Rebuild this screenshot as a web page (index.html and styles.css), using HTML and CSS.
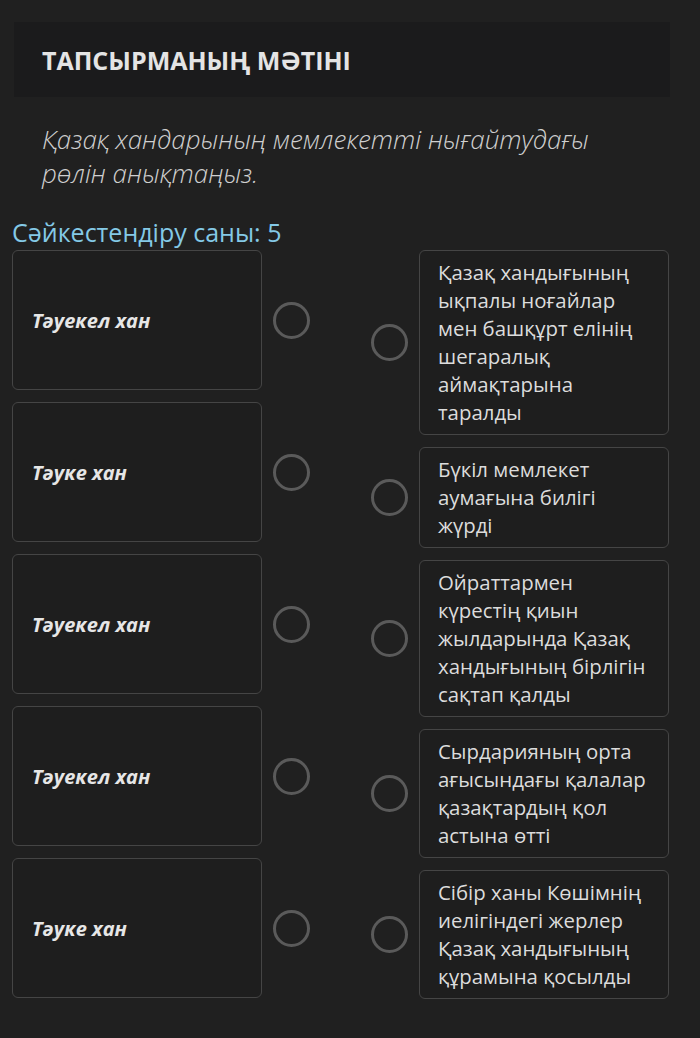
FILE: index.html
```html
<!DOCTYPE html>
<html lang="kk">
<head>
    <meta charset="UTF-8">
    <title>Тапсырма</title>
    <link rel="stylesheet" href="styles.css">
</head>
<body>
    <div class="page">
        <div class="task-head">
            <h2>ТАПСЫРМАНЫҢ МӘТІНІ</h2>
        </div>
        <p class="question">Қазақ хандарының мемлекетті нығайтудағы рөлін анықтаңыз.</p>
        <div class="count">Сәйкестендіру саны: 5</div>

        <div class="match">
            <div class="col">
                <div class="item">
                    <div class="card left">Тәуекел хан</div>
                    <span class="dot"></span>
                </div>
                <div class="item">
                    <div class="card left">Тәуке хан</div>
                    <span class="dot"></span>
                </div>
                <div class="item">
                    <div class="card left">Тәуекел хан</div>
                    <span class="dot"></span>
                </div>
                <div class="item">
                    <div class="card left">Тәуекел хан</div>
                    <span class="dot"></span>
                </div>
                <div class="item">
                    <div class="card left">Тәуке хан</div>
                    <span class="dot"></span>
                </div>
            </div>
            <div class="col">
                <div class="item">
                    <span class="dot"></span>
                    <div class="card right">Қазақ хандығының ықпалы ноғайлар мен башқұрт елінің шегаралық аймақтарына таралды</div>
                </div>
                <div class="item">
                    <span class="dot"></span>
                    <div class="card right">Бүкіл мемлекет аумағына билігі жүрді</div>
                </div>
                <div class="item">
                    <span class="dot"></span>
                    <div class="card right">Ойраттармен күрестің қиын жылдарында Қазақ хандығының бірлігін сақтап қалды</div>
                </div>
                <div class="item">
                    <span class="dot"></span>
                    <div class="card right">Сырдарияның орта ағысындағы қалалар қазақтардың қол астына өтті</div>
                </div>
                <div class="item">
                    <span class="dot"></span>
                    <div class="card right">Сібір ханы Көшімнің иелігіндегі жерлер Қазақ хандығының құрамына қосылды</div>
                </div>
            </div>
        </div>
    </div>
</body>
</html>
```
FILE: styles.css
```css
body {
    margin: 0;
    background-color: #202020;
    font-family: "Open Sans", "Noto Sans", sans-serif;
    color: #e2e2e2;
}
.page {
    padding: 22px 31px 40px 12px;
}
.task-head {
    background-color: #1b1b1c;
    margin-left: 2px;
    margin-right: -1px;
    height: 75px;
    display: flex;
    align-items: center;
    padding-left: 28px;
}
.task-head h2 {
    margin: 0;
    font-size: 25px;
    font-weight: 700;
    color: #e4e4e4;
}
.question {
    margin: 25px 0 0 30px;
    font-size: 26px;
    font-style: italic;
    font-weight: 300;
    line-height: 34px;
    color: #cfcfcf;
    max-width: 575px;
}
.count {
    margin-top: 27px;
    font-size: 25px;
    line-height: 30px;
    color: #84c9e6;
}
.match {
    display: flex;
    justify-content: space-between;
    margin-top: 3px;
}
.col {
    display: flex;
    flex-direction: column;
    gap: 12px;
}
.item {
    display: flex;
    align-items: center;
    gap: 11px;
}
.card {
    width: 250px;
    box-sizing: border-box;
    border: 1px solid #454545;
    border-radius: 6px;
    background-color: #1e1e1e;
}
.card.left {
    height: 140px;
    display: flex;
    align-items: center;
    padding-left: 19px;
    font-size: 20px;
    font-weight: 700;
    font-style: italic;
    color: #e6e6e6;
}
.card.right {
    padding: 7px 20px 8px 18px;
    font-size: 20.4px;
    line-height: 28px;
    color: #dcdcdc;
}
.dot {
    width: 31px;
    height: 31px;
    border: 3px solid #5a5a5a;
    border-radius: 50%;
    flex-shrink: 0;
}
```
